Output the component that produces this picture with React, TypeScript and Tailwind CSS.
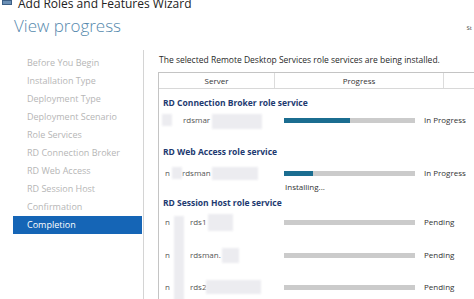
const navItems = [
  'Before You Begin',
  'Installation Type',
  'Deployment Type',
  'Deployment Scenario',
  'Role Services',
  'RD Connection Broker',
  'RD Web Access',
  'RD Session Host',
  'Confirmation',
  'Completion',
];

function Blur({ w, h, className = '' }: { w: string; h: string; className?: string }) {
  return <div className={`${w} ${h} bg-[#ececf0] blur-[1px] shrink-0 ${className}`} />;
}

function Bar({ fill }: { fill: string }) {
  return (
    <div className="ml-[9px] w-[131px] h-[5px] bg-[#cbcbcb] shrink-0">
      <div className={`h-full bg-[#1b6d90] ${fill}`} />
    </div>
  );
}

export default function App() {
  return (
    <div
      className="w-[474px] h-[299px] overflow-hidden bg-white text-[#333] relative"
      style={{ fontFamily: '"Open Sans", "Noto Sans", sans-serif' }}
    >
      {/* window title, cut by the crop */}
      <div className="h-[8px] overflow-hidden flex items-end gap-[6px] pl-[2px]">
        <div className="w-[10px] h-[5px] bg-[#6a8fb5] border border-[#3c5f86] shrink-0 mb-[3px]" />
        <span className="text-[12px] leading-[12px] text-[#222] -mb-[2px]">Add Roles and Features Wizard</span>
      </div>

      {/* header */}
      <div className="flex items-center justify-between h-[36px] pl-[14px] pr-[2px]">
        <h1 className="text-[17px] font-light text-[#5589ad] leading-none -mt-[2px]">View progress</h1>
        <span className="text-[6px] text-[#444] mt-[4px]">St</span>
      </div>

      <div className="flex h-[255px]">
        {/* left nav */}
        <div className="w-[144px] shrink-0 border-r border-[#d4d4d4] pt-[4px] mt-[6px]">
          <div className="ml-[13px] w-[129px]">
            {navItems.map((item) =>
              item === 'Completion' ? (
                <div key={item} className="h-[18px] flex items-center pl-[14px] bg-[#1565b6] text-white text-[9px]">
                  {item}
                </div>
              ) : (
                <div key={item} className="h-[18px] flex items-center pl-[14px] text-[#b6b6b6] text-[9px]">
                  {item}
                </div>
              )
            )}
          </div>
        </div>

        {/* main */}
        <div className="flex-1 pl-[14px] pt-[9px] text-[8px]">
          <p className="pl-[1px] h-[14px] flex items-center text-[#2a2a2a] text-[8.5px] whitespace-nowrap">
            The selected Remote Desktop Services role services are being installed.
          </p>

          <div className="mt-[5px] border-l border-t border-[#c4c4c4] relative h-[300px]">
            {/* header */}
            <div className="flex h-[16px] border-b border-[#d8d8d8] text-[#333]">
              <div className="w-[116px] flex items-center justify-center border-r border-[#dcdcdc]">Server</div>
              <div className="w-[169px] flex items-center justify-center border-r border-[#dcdcdc]">Progress</div>
              <div className="flex-1" />
            </div>

            {/* RD Connection Broker */}
            <div className="mt-[4px] h-[20px] flex items-center pl-[4px] font-bold text-[#1d3a70] text-[8.5px]">
              RD Connection Broker role service
            </div>
            <div className="-mt-[1px] h-[16px] flex items-center">
              <div className="w-[116px] flex items-center shrink-0">
                <Blur w="w-[10px]" h="h-[12px]" className="ml-[3px]" />
                <span className="ml-[11px] text-[#555]">rdsmar</span>
                <Blur w="w-[50px]" h="h-[15px]" className="ml-[2px] mt-[3px]" />
              </div>
              <Bar fill="w-[66px]" />
              <span className="ml-[9px] whitespace-nowrap">In Progress</span>
            </div>

            {/* RD Web Access */}
            <div className="mt-[14px] h-[20px] flex items-center pl-[4px] font-bold text-[#1d3a70] text-[8.5px]">
              RD Web Access role service
            </div>
            <div className="mt-[3px] h-[16px] flex items-center">
              <div className="w-[116px] flex items-center shrink-0">
                <span className="ml-[6px] text-[#555]">n</span>
                <Blur w="w-[10px]" h="h-[12px]" className="ml-[2px]" />
                <span className="text-[#555]">rdsman</span>
                <Blur w="w-[46px]" h="h-[13px]" className="ml-[1px]" />
              </div>
              <Bar fill="w-[29px]" />
              <span className="ml-[9px] whitespace-nowrap">In Progress</span>
            </div>
            <div className="h-[12px] flex items-center pl-[126px] text-[#333]">Installing...</div>

            {/* RD Session Host */}
            <div className="h-[20px] flex items-center pl-[4px] font-bold text-[#1d3a70] text-[8.5px]">
              RD Session Host role service
            </div>

            {/* redaction strip over the server names */}
            <div className="absolute left-[15px] top-[143px] w-[10px] h-[90px] bg-[#ececf0] blur-[1px]" />

            <div className="mt-[1px] h-[16px] flex items-center">
              <div className="w-[116px] flex items-center shrink-0">
                <span className="ml-[6px] text-[#555]">n</span>
                <span className="ml-[20px] text-[#555]">rds1</span>
                <Blur w="w-[25px]" h="h-[17px]" className="ml-[2px]" />
              </div>
              <Bar fill="w-0" />
              <span className="ml-[9px] whitespace-nowrap">Pending</span>
            </div>
            <div className="mt-[17px] h-[16px] flex items-center">
              <div className="w-[116px] flex items-center shrink-0">
                <span className="ml-[6px] text-[#555]">n</span>
                <span className="ml-[20px] text-[#555]">rdsman.</span>
                <Blur w="w-[17px]" h="h-[15px]" className="ml-[1px]" />
              </div>
              <Bar fill="w-0" />
              <span className="ml-[9px] whitespace-nowrap">Pending</span>
            </div>
            <div className="mt-[16px] h-[16px] flex items-center">
              <div className="w-[116px] flex items-center shrink-0">
                <span className="ml-[6px] text-[#555]">n</span>
                <span className="ml-[20px] text-[#555]">rds2</span>
                <Blur w="w-[55px]" h="h-[14px]" className="ml-[0px]" />
              </div>
              <Bar fill="w-0" />
              <span className="ml-[9px] whitespace-nowrap">Pending</span>
            </div>
          </div>
        </div>
      </div>
    </div>
  );
}
